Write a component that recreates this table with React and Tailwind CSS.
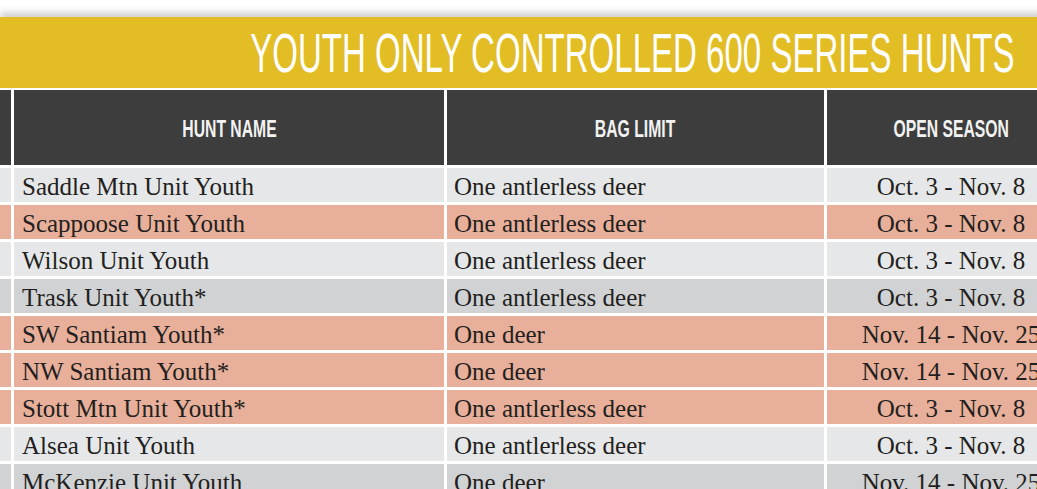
const rows = [
  { name: 'Saddle Mtn Unit Youth', bag: 'One antlerless deer', season: 'Oct. 3 - Nov. 8', tone: 'light' },
  { name: 'Scappoose Unit Youth', bag: 'One antlerless deer', season: 'Oct. 3 - Nov. 8', tone: 'salmon' },
  { name: 'Wilson Unit Youth', bag: 'One antlerless deer', season: 'Oct. 3 - Nov. 8', tone: 'light' },
  { name: 'Trask Unit Youth*', bag: 'One antlerless deer', season: 'Oct. 3 - Nov. 8', tone: 'gray' },
  { name: 'SW Santiam Youth*', bag: 'One deer', season: 'Nov. 14 - Nov. 25', tone: 'salmon' },
  { name: 'NW Santiam Youth*', bag: 'One deer', season: 'Nov. 14 - Nov. 25', tone: 'salmon' },
  { name: 'Stott Mtn Unit Youth*', bag: 'One antlerless deer', season: 'Oct. 3 - Nov. 8', tone: 'salmon' },
  { name: 'Alsea Unit Youth', bag: 'One antlerless deer', season: 'Oct. 3 - Nov. 8', tone: 'light' },
  { name: 'McKenzie Unit Youth', bag: 'One deer', season: 'Nov. 14 - Nov. 25', tone: 'gray' },
]

const TONES = {
  light: 'bg-[#e6e7e8]',
  salmon: 'bg-[#e8b09a]',
  gray: 'bg-[#d1d2d4]',
}

const serif = "font-['Liberation_Serif','Times_New_Roman',serif]"
const sans = "font-['Liberation_Sans',Arial,sans-serif]"

function HeadCell({ children, className = '' }) {
  return (
    <div className={`h-[75px] bg-[#3d3d3d] flex items-center justify-center pt-[4px] ${className}`}>
      <span className={`${sans} inline-block text-[23.5px] font-bold leading-none text-[#f2f2f2] scale-x-[0.67] whitespace-nowrap`}>
        {children}
      </span>
    </div>
  )
}

export default function App() {
  return (
    <div className="w-[1037px] h-[489px] overflow-hidden bg-white">
      <div className="w-[1080px]">
        <div className="h-[17px] bg-white" />
        <div className="h-[71px] bg-[#e2bd24] flex items-center justify-end pr-[65px] shadow-[0_-5px_7px_rgba(0,0,0,0.18)]">
          <span className={`${sans} inline-block text-[56px] leading-none text-white scale-x-[0.59] origin-right whitespace-nowrap pt-[1px]`}>
            YOUTH ONLY CONTROLLED 600 SERIES HUNTS
          </span>
        </div>

        <div className="mt-[2px] grid grid-cols-[11px_430px_377px_248px] gap-x-[3px] gap-y-[3px]">
          <HeadCell />
          <HeadCell>HUNT NAME</HeadCell>
          <HeadCell>BAG LIMIT</HeadCell>
          <HeadCell>OPEN SEASON</HeadCell>

          {rows.map((r, i) => {
            const bg = TONES[r.tone]
            return [
              <div key={`a${i}`} className={`h-[34px] ${bg}`} />,
              <div key={`b${i}`} className={`h-[34px] ${bg} ${serif} text-[25px] leading-[34px] text-[#231f20] pl-[8px] pt-[2px] whitespace-nowrap`}>
                {r.name}
              </div>,
              <div key={`c${i}`} className={`h-[34px] ${bg} ${serif} text-[25px] leading-[34px] text-[#231f20] pl-[7px] pt-[2px] whitespace-nowrap`}>
                {r.bag}
              </div>,
              <div key={`d${i}`} className={`h-[34px] ${bg} ${serif} text-[25px] leading-[34px] text-[#231f20] text-center pt-[2px] whitespace-nowrap`}>
                {r.season}
              </div>,
            ]
          })}
        </div>
      </div>
    </div>
  )
}
